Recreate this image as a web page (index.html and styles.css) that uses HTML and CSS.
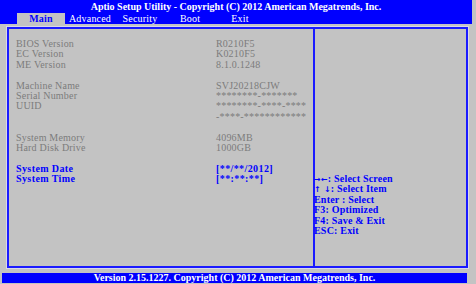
FILE: index.html
```html
<!DOCTYPE html>
<html>
<head>
<meta charset="utf-8">
<link rel="stylesheet" href="styles.css">
</head>
<body>
<div class="screen">
  <header class="top">
    <div class="title">Aptio Setup Utility - Copyright (C) 2012 American Megatrends, Inc.</div>
    <nav class="tabs">
      <span class="tab active">Main</span>
      <span class="tab">Advanced</span>
      <span class="tab">Security</span>
      <span class="tab">Boot</span>
      <span class="tab">Exit</span>
    </nav>
  </header>
  <main class="frame">
    <section class="info">
      <div class="row"><span>BIOS Version</span><span>R0210F5</span></div>
      <div class="row"><span>EC Version</span><span>K0210F5</span></div>
      <div class="row"><span>ME Version</span><span>8.1.0.1248</span></div>
      <div class="row"></div>
      <div class="row"><span>Machine Name</span><span>SVJ20218CJW</span></div>
      <div class="row"><span>Serial Number</span><span>********-*******</span></div>
      <div class="row"><span>UUID</span><span>********-****-****</span></div>
      <div class="row"><span></span><span>-****-************</span></div>
      <div class="row"></div>
      <div class="row"><span>System Memory</span><span>4096MB</span></div>
      <div class="row"><span>Hard Disk Drive</span><span>1000GB</span></div>
      <div class="row"></div>
      <div class="row sel"><span>System Date</span><span>[**/**/2012]</span></div>
      <div class="row sel"><span>System Time</span><span>[**:**:**]</span></div>
    </section>
    <aside class="help">
      <div class="hline"><span class="arrows">&#8594;&#8592;</span>: Select Screen</div>
      <div class="hline"><span class="arrows">&#8593; &#8595;</span>: Select Item</div>
      <div class="hline">Enter : Select</div>
      <div class="hline">F3: Optimized</div>
      <div class="hline">F4: Save &amp; Exit</div>
      <div class="hline">ESC: Exit</div>
    </aside>
  </main>
  <footer class="bottom">Version 2.15.1227. Copyright (C) 2012 American Megatrends, Inc.</footer>
</div>
</body>
</html>
```

FILE: styles.css
```css
html, body {
  margin: 0;
  padding: 0;
  background: #c3c3c3;
}
.screen {
  width: 476px;
  height: 284px;
  overflow: hidden;
  font-family: "Liberation Serif", "Times New Roman", serif;
  font-size: 10px;
}
.top {
  width: 472px;
  height: 24px;
  background: #0000ff;
  color: #ffffff;
}
.title {
  height: 13px;
  line-height: 14px;
  text-align: center;
  font-weight: bold;
}
.tabs {
  display: flex;
  height: 11px;
  padding-left: 15px;
}
.tab {
  width: 50px;
  text-align: center;
  line-height: 11px;
  letter-spacing: 0.2px;
}
.tab.active {
  background: #c3c3c3;
  color: #0000ff;
  font-weight: bold;
  margin-left: 2px;
  width: 48px;
}
.frame {
  margin: 3px 0 0 7px;
  width: 457px;
  height: 237px;
  border: 2px solid #1a1aff;
  outline: 1px solid #d8d8e8;
  display: flex;
}
.info {
  width: 297px;
  padding: 10px 0 0 7px;
  border-right: 2px solid #1a1aff;
}
.row {
  display: grid;
  grid-template-columns: 200px auto;
  height: 10.4px;
  line-height: 10.4px;
  color: #7c7c7c;
  letter-spacing: 0.2px;
}
.row.sel {
  color: #0000ff;
  font-weight: bold;
  letter-spacing: 0.4px;
}
.help {
  flex: 1;
  padding-top: 145px;
  color: #0000ff;
  font-weight: bold;
  margin-left: -1px;
  letter-spacing: 0.2px;
}
.hline {
  height: 10.4px;
  line-height: 10.4px;
  white-space: nowrap;
}
.arrows {
  font-family: "DejaVu Sans", sans-serif;
  font-size: 8px;
  line-height: 0;
}
.bottom {
  margin-top: 5px;
  width: 465px;
  margin-left: 2px;
  height: 10px;
  line-height: 10px;
  background: #0000ff;
  color: #ffffff;
  font-weight: bold;
  text-align: center;
}
```
